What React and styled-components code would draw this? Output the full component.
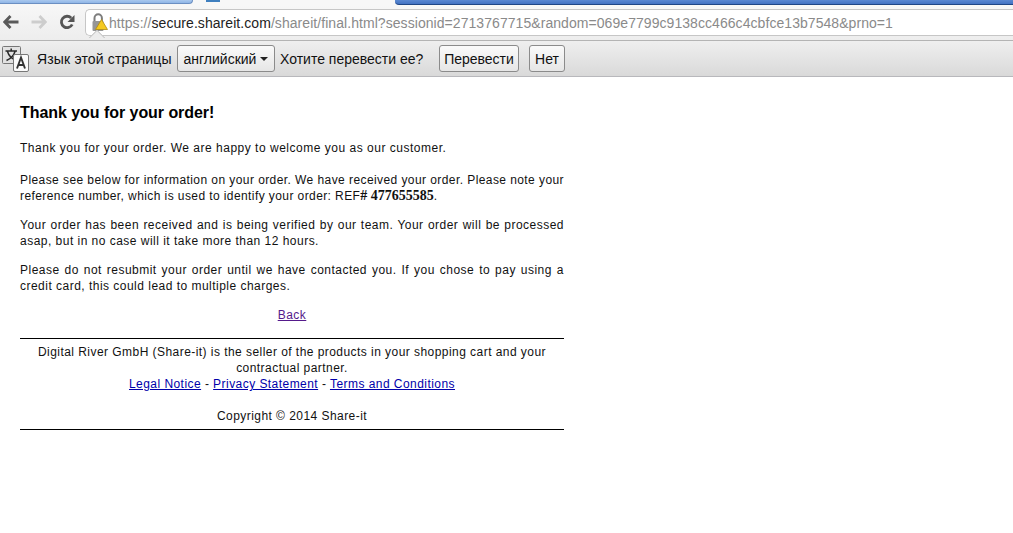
import React from 'react'
import styled, { createGlobalStyle } from 'styled-components'

const GlobalStyle = createGlobalStyle`
  html, body {
    margin: 0;
    padding: 0;
    background: #fff;
    overflow: hidden;
  }
`

const BackIcon = () => (
  <svg width="16" height="14" viewBox="0 0 16 14">
    <path d="M7.5 1 L1.8 7 L7.5 13 M2.5 7 H15.5" fill="none" stroke="#5a5a5a" strokeWidth="2.8" />
  </svg>
)

const ForwardIcon = () => (
  <svg width="16" height="14" viewBox="0 0 16 14">
    <path d="M8.5 1 L14.2 7 L8.5 13 M13.5 7 H0.5" fill="none" stroke="#cdcdcd" strokeWidth="2.8" />
  </svg>
)

const ReloadIcon = () => (
  <svg width="16" height="16" viewBox="0 0 16 16">
    <path d="M13.2 10.5 A5.7 5.7 0 1 1 12.2 4" fill="none" stroke="#555" strokeWidth="2.8" />
    <path d="M15.5 1 V8 H8.5 Z" fill="#555" />
  </svg>
)

const LockIcon = () => (
  <svg width="16" height="19" viewBox="0 0 16 19">
    <path d="M2.5 9 V5 A3.7 3.7 0 0 1 9.9 5 V9" fill="none" stroke="#7d7d7d" strokeWidth="2" />
    <rect x="0.5" y="8" width="11" height="10" rx="1" fill="#969696" />
    <path d="M9.5 6.5 L15.5 16.5 H3.5 Z" fill="#f5c91e" stroke="#b08a10" strokeWidth="0.8" strokeLinejoin="round" />
  </svg>
)

const TranslateIcon = () => (
  <svg width="30" height="28" viewBox="0 0 30 28">
    <rect x="2.5" y="1.5" width="18" height="17" rx="1" fill="#e2e2e2" stroke="#777" />
    <path d="M5.5 6 H17 M11.2 3.5 V6 M7.5 6.5 C8.5 10 11.5 13.5 16 15.5 M15 6.5 C14 10 11 13.5 6.5 15.5" fill="none" stroke="#2a2a2a" strokeWidth="1.5" />
    <rect x="13.5" y="9.5" width="15" height="17" rx="1.5" fill="#fbfbfb" stroke="#777" />
    <path d="M17 23.5 L21 12.5 L25 23.5 M18.2 20 H23.8" fill="none" stroke="#333" strokeWidth="1.9" />
  </svg>
)

const Caret = () => (
  <svg width="8" height="4" viewBox="0 0 8 4">
    <path d="M0 0 H8 L4 4 Z" fill="#222" />
  </svg>
)

const App = () => {
  return (
    <Window>
      <GlobalStyle />
      <TabStrip>
        <LeftStrip />
        <ActiveTab>
          <TabFavicon />
        </ActiveTab>
        <RightStrip />
      </TabStrip>

      <Toolbar>
        <NavButtons>
          <BackIcon />
          <ForwardIcon />
          <ReloadIcon />
        </NavButtons>
        <AddressBar>
          <LockSlot><LockIcon /></LockSlot>
          <Url>
            https://<Host>secure.shareit.com</Host>/shareit/final.html?sessionid=2713767715&amp;random=069e7799c9138cc466c4cbfce13b7548&amp;prno=1
          </Url>
        </AddressBar>
        <BubbleNotch />
      </Toolbar>

      <TranslateBar>
        <IconSlot><TranslateIcon /></IconSlot>
        <BarText>Язык этой страницы</BarText>
        <LanguageButton>
          английский <Caret />
        </LanguageButton>
        <QuestionText>Хотите перевести ее?</QuestionText>
        <BarButton>Перевести</BarButton>
        <NoButton>Нет</NoButton>
      </TranslateBar>

      <Content>
        <Heading>Thank you for your order!</Heading>
        <LeadParagraph>Thank you for your order. We are happy to welcome you as our customer.</LeadParagraph>
        <TightParagraph>
          Please see below for information on your order. We have received your order. Please note your reference number, which is used to identify your order: REF<Ref># 477655585</Ref>.
        </TightParagraph>
        <Paragraph>
          Your order has been received and is being verified by our team. Your order will be processed asap, but in no case will it take more than 12 hours.
        </Paragraph>
        <Paragraph>
          Please do not resubmit your order until we have contacted you. If you chose to pay using a credit card, this could lead to multiple charges.
        </Paragraph>
        <BackRow><VisitedLink href="#">Back</VisitedLink></BackRow>
        <Footer>
          Digital River GmbH (Share-it) is the seller of the products in your shopping cart and your contractual partner.
          <br />
          <FooterLink href="#">Legal Notice</FooterLink> - <FooterLink href="#">Privacy Statement</FooterLink> - <FooterLink href="#">Terms and Conditions</FooterLink>
          <Copyright>Copyright © 2014 Share-it</Copyright>
        </Footer>
      </Content>
    </Window>
  )
}

export default App

const Window = styled.div`
  width: 1013px;
  height: 533px;
  background: #fff;
  font-family: 'Liberation Sans', Arial, sans-serif;
  overflow: hidden;
`

const TabStrip = styled.div`
  display: flex;
  height: 5px;
  background: #f6f6f6;
`

const LeftStrip = styled.div`
  width: 193px;
  height: 4px;
  box-sizing: border-box;
  flex: none;
  background: linear-gradient(#a9c8ee, #8fb5e6);
  border-bottom: 1px solid #6b8fc2;
  border-right: 1px solid #6b8fc2;
  border-bottom-right-radius: 4px;
`

const RightStrip = styled.div`
  flex: 1;
  box-sizing: border-box;
  background: linear-gradient(#5a88d2, #4272c2);
  border-bottom: 1px solid #1f4685;
  border-bottom-left-radius: 4px;
`

const ActiveTab = styled.div`
  width: 202px;
  flex: none;
  background: #f7f7f7;
`

const TabFavicon = styled.div`
  width: 14px;
  height: 2px;
  margin-left: 13px;
  background: #3f7fbf;
`

const Toolbar = styled.div`
  height: 35px;
  box-sizing: border-box;
  padding-top: 4px;
  display: flex;
  position: relative;
  background: linear-gradient(#f7f7f7, #ededed);
`

const NavButtons = styled.div`
  display: flex;
  align-items: center;
  gap: 12px;
  padding-left: 3px;
  box-sizing: border-box;
  width: 85px;
  height: 26px;
  flex: none;
`

const AddressBar = styled.div`
  flex: 1;
  height: 27px;
  box-sizing: border-box;
  background: #fff;
  border: 1px solid #c6c6c6;
  border-right: none;
  border-radius: 5px 0 0 5px;
  display: flex;
  align-items: center;
  padding-left: 6px;
`

const BubbleNotch = styled.div`
  position: absolute;
  left: 91px;
  top: 27px;
  width: 12px;
  height: 12px;
  box-sizing: border-box;
  transform: rotate(45deg);
  background: #ededed;
  border-top: 1px solid #bdbdbd;
  border-left: 1px solid #bdbdbd;
  clip-path: polygon(0 0, 100% 0, 0 100%);
`

const LockSlot = styled.div`
  width: 17px;
  flex: none;
  display: flex;
`

const Url = styled.div`
  font-size: 14px;
  letter-spacing: 0.06px;
  color: #8a8a8a;
  white-space: nowrap;
`

const Host = styled.span`
  color: #222;
`

const TranslateBar = styled.div`
  height: 37px;
  box-sizing: border-box;
  border-top: 1px solid #b4b4b4;
  border-bottom: 1px solid #b8b8bc;
  background: linear-gradient(#efefef, #d9d9d9);
  display: flex;
  align-items: center;
  font-size: 14px;
  color: #111;
`

const IconSlot = styled.div`
  width: 37px;
  flex: none;
  display: flex;
  box-sizing: border-box;
`

const BarText = styled.span`
  white-space: nowrap;
  width: 140px;
  flex: none;
  letter-spacing: 0.16px;
`

const QuestionText = styled(BarText)`
  width: 159px;
  letter-spacing: 0;
`

const BarButton = styled.div`
  height: 27px;
  box-sizing: border-box;
  border: 1px solid #8b8b8b;
  border-radius: 3px;
  background: linear-gradient(#fafafa, #e6e6e6);
  padding: 0 4px;
  display: flex;
  align-items: center;
  justify-content: center;
  flex: none;
  width: 80px;
`

const LanguageButton = styled(BarButton)`
  width: 98px;
  gap: 4px;
  margin-right: 5px;
`

const NoButton = styled(BarButton)`
  width: 36px;
  margin-left: 10px;
`

const Content = styled.div`
  width: 544px;
  margin-left: 20px;
  padding-top: 26px;
  font-size: 12px;
  line-height: 16px;
  letter-spacing: 0.48px;
  color: #111;
`

const Heading = styled.h1`
  margin: 0 0 18px;
  font-size: 16px;
  line-height: 19px;
  font-weight: bold;
  letter-spacing: -0.05px;
  color: #000;
`

const Paragraph = styled.p`
  margin: 0 0 13px;
  text-align: justify;
`

const LeadParagraph = styled(Paragraph)`
  margin-bottom: 16px;
  letter-spacing: 0.51px;
`

const TightParagraph = styled(Paragraph)`
  letter-spacing: 0.41px;
`

const Ref = styled.b`
  font-family: 'Liberation Serif', 'Times New Roman', serif;
  font-size: 14px;
  line-height: 14px;
  letter-spacing: 0;
`

const BackRow = styled.div`
  text-align: center;
  height: 31px;
`

const VisitedLink = styled.a`
  color: #551a8b;
  text-decoration: underline;
`

const Footer = styled.div`
  border-top: 1px solid #000;
  border-bottom: 1px solid #000;
  text-align: center;
  letter-spacing: 0.45px;
  padding: 5px 0 5px;
`

const FooterLink = styled.a`
  color: #0000aa;
  text-decoration: underline;
`

const Copyright = styled.div`
  margin-top: 16px;
`
